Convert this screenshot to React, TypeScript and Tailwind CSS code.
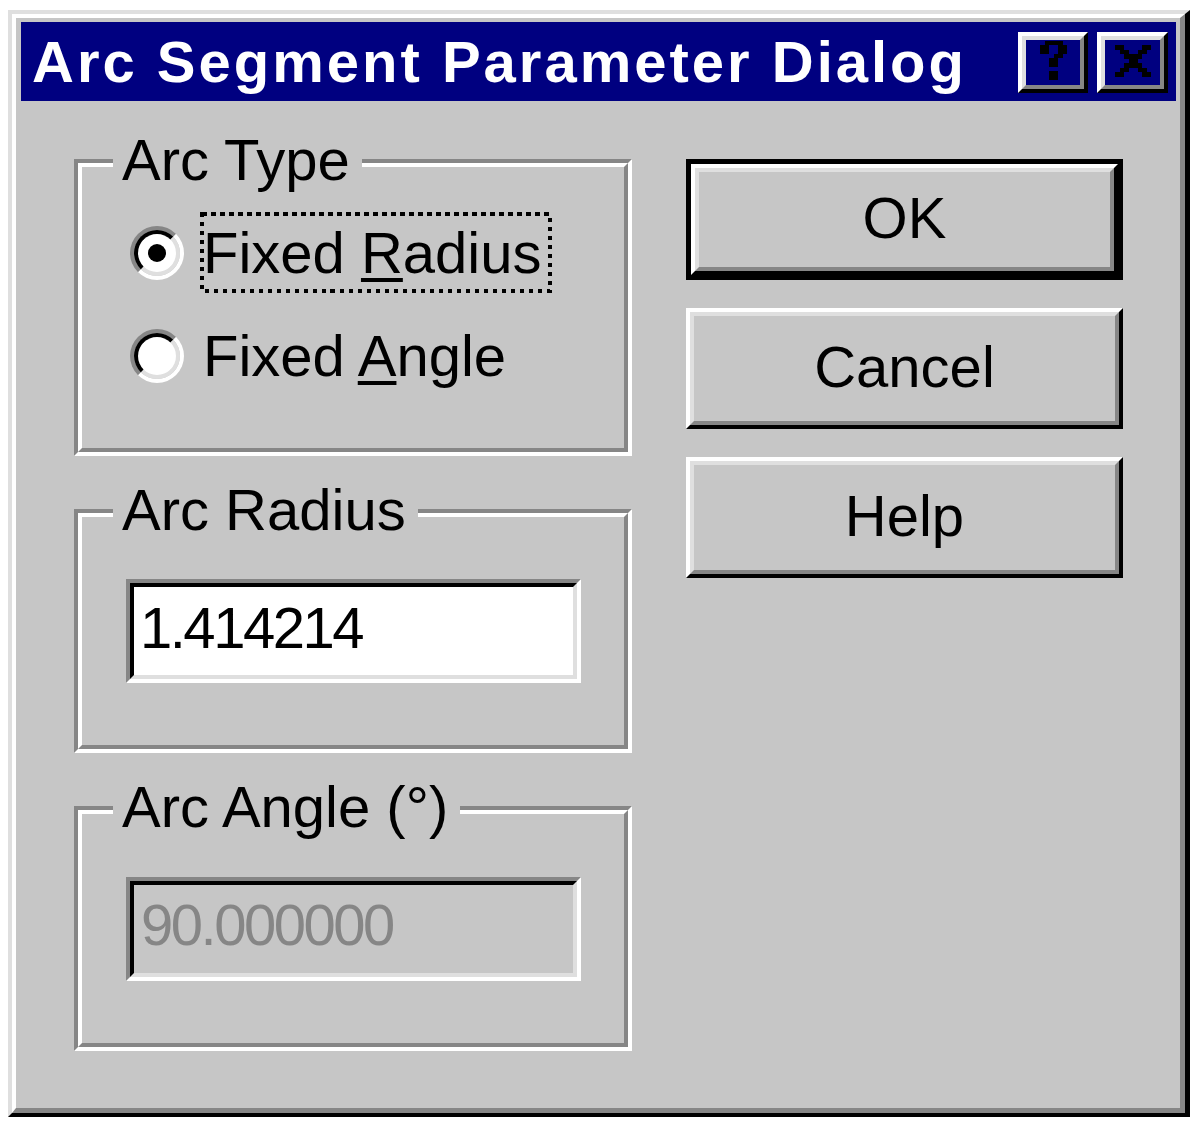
import React from 'react';

const FONT = "font-['Liberation_Sans',Arial,sans-serif]";

// raised win95 bevel: white/black outer, light/gray inner
const Bevel: React.FC<{ className?: string; children?: React.ReactNode }> = ({ className = '', children }) => (
  <div className={`border-4 border-t-white border-l-white border-b-black border-r-black ${className}`}>
    <div className="h-full border-4 border-t-[#dfdfdf] border-l-[#dfdfdf] border-b-[#868686] border-r-[#868686] flex items-center justify-center">
      {children}
    </div>
  </div>
);

const HelpGlyph = () => (
  <svg width="27" height="39" viewBox="0 0 6 9" preserveAspectRatio="none" shapeRendering="crispEdges" className="mb-[4px]">
    <rect x="1" y="0" width="4" height="1" fill="black" />
    <rect x="0" y="1" width="2" height="2" fill="black" />
    <rect x="4" y="1" width="2" height="2" fill="black" />
    <rect x="3" y="3" width="2" height="1" fill="black" />
    <rect x="2" y="4" width="2" height="2" fill="black" />
    <rect x="2" y="7" width="2" height="2" fill="black" />
  </svg>
);

const CloseGlyph = () => (
  <svg width="36" height="32" viewBox="0 0 8 7" preserveAspectRatio="none" shapeRendering="crispEdges" className="mb-[4px]">
    <rect x="0" y="0" width="2" height="1" fill="black" />
    <rect x="6" y="0" width="2" height="1" fill="black" />
    <rect x="1" y="1" width="2" height="1" fill="black" />
    <rect x="5" y="1" width="2" height="1" fill="black" />
    <rect x="2" y="2" width="4" height="1" fill="black" />
    <rect x="3" y="3" width="2" height="1" fill="black" />
    <rect x="2" y="4" width="4" height="1" fill="black" />
    <rect x="1" y="5" width="2" height="1" fill="black" />
    <rect x="5" y="5" width="2" height="1" fill="black" />
    <rect x="0" y="6" width="2" height="1" fill="black" />
    <rect x="6" y="6" width="2" height="1" fill="black" />
  </svg>
);

const Radio: React.FC<{ checked?: boolean }> = ({ checked }) => (
  <div className="w-[54px] h-[54px] shrink-0 rounded-full border-4 border-t-[#868686] border-l-[#868686] border-b-white border-r-white">
    <div className="w-full h-full rounded-full border-4 border-t-black border-l-black border-b-[#dfdfdf] border-r-[#dfdfdf] bg-white flex items-center justify-center">
      {checked && <div className="w-[18px] h-[18px] rounded-full bg-black" />}
    </div>
  </div>
);

const GroupBox: React.FC<{ label: string; height: string; children?: React.ReactNode }> = ({ label, height, children }) => (
  <div className={`relative ${height}`}>
    <div className="h-full border-4 border-t-[#868686] border-l-[#868686] border-b-white border-r-white">
      <div className="h-full border-4 border-t-white border-l-white border-b-[#868686] border-r-[#868686]">
        {children}
      </div>
    </div>
    <span className="absolute left-[39px] top-[-28px] bg-[#c6c6c6] pl-[9px] pr-[12px] leading-[58px] whitespace-nowrap">
      {label}
    </span>
  </div>
);

const Field: React.FC<{ value: string; disabled?: boolean }> = ({ value, disabled }) => (
  <div className="w-[455px] h-[104px] border-4 border-t-[#868686] border-l-[#868686] border-b-white border-r-white">
    <div
      className={`h-full border-4 border-t-black border-l-black border-b-[#dfdfdf] border-r-[#dfdfdf] leading-[58px] tracking-[-2.5px] ${
        disabled ? 'bg-[#c6c6c6] text-[#868686] pl-[7px] pt-[11px]' : 'bg-white text-black pl-[6px] pt-[12px]'
      }`}
    >
      {value}
    </div>
  </div>
);

export default function App() {
  return (
    <div className={`w-[1194px] h-[1124px] bg-white pt-[10px] pl-[8px] ${FONT} text-[58px] text-black`}>
      <div className="w-[1182px] h-[1107px] border-4 border-r-[5px] border-t-[#dfdfdf] border-l-[#dfdfdf] border-b-black border-r-black">
        <div className="h-full border-4 border-r-[5px] border-b-[5px] border-t-white border-l-white border-b-[#868686] border-r-[#868686] bg-[#c6c6c6] pt-[4px] pl-[5px] pr-[4px]">
          {/* title bar */}
          <div className="h-[79px] bg-[#000080] flex items-start justify-between">
            <div className="pl-[11px] pt-[11px] font-bold text-white leading-[58px] tracking-[3px] whitespace-nowrap">
              Arc Segment Parameter Dialog
            </div>
            <div className="flex gap-[9px] pt-[10px] pr-[8px]">
              <Bevel className="w-[70px] h-[61px]">
                <HelpGlyph />
              </Bevel>
              <Bevel className="w-[71px] h-[61px]">
                <CloseGlyph />
              </Bevel>
            </div>
          </div>

          {/* body */}
          <div className="flex pl-[53px] pt-[58px]">
            <div className="w-[558px] flex flex-col gap-[53px]">
              <GroupBox label="Arc Type" height="h-[297px]">
                <div className="pt-[45px] pl-[48px] flex flex-col gap-[22px]">
                  <div className="flex items-center">
                    <Radio checked />
                    <div className="relative ml-[16px] pl-[3px] pr-[10px] pt-[12px] pb-[11px] leading-[58px] whitespace-nowrap">
                      <svg className="absolute inset-0 w-full h-full" shapeRendering="crispEdges">
                        <rect x="2" y="2" width="calc(100% - 4px)" height="calc(100% - 4px)" fill="none" stroke="black" strokeWidth="4" strokeDasharray="4.5 4.5" />
                      </svg>
                      Fixed <span className="underline decoration-4 underline-offset-[5px]">R</span>adius
                    </div>
                  </div>
                  <div className="flex items-center">
                    <Radio />
                    <div className="ml-[16px] pl-[3px] pr-[10px] pt-[12px] pb-[11px] leading-[58px] whitespace-nowrap">
                      Fixed <span className="underline decoration-4 underline-offset-[5px]">A</span>ngle
                    </div>
                  </div>
                </div>
              </GroupBox>

              <GroupBox label="Arc Radius" height="h-[244px]">
                <div className="pt-[62px] pl-[44px]">
                  <Field value="1.414214" />
                </div>
              </GroupBox>

              <GroupBox label="Arc Angle (°)" height="h-[245px]">
                <div className="pt-[63px] pl-[44px]">
                  <Field value="90.000000" disabled />
                </div>
              </GroupBox>
            </div>

            <div className="ml-[54px] w-[437px] flex flex-col gap-[28px]">
              <div className="h-[121px] border-[5px] border-black">
                <Bevel className="h-full">
                  <span className="leading-[58px] pb-[3px]">OK</span>
                </Bevel>
              </div>
              <Bevel className="h-[121px]">
                <span className="leading-[58px] pb-[3px]">Cancel</span>
              </Bevel>
              <Bevel className="h-[121px]">
                <span className="leading-[58px] pb-[3px]">Help</span>
              </Bevel>
            </div>
          </div>
        </div>
      </div>
    </div>
  );
}
